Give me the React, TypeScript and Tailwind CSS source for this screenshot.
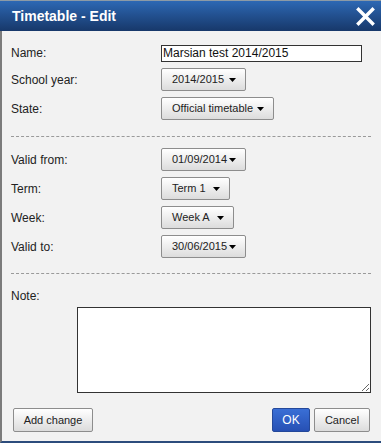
import React from 'react';

const Caret = () => (
  <svg width="7" height="4" viewBox="0 0 7 4" className="shrink-0">
    <path d="M0 0 H7 L3.5 4 Z" fill="#000" />
  </svg>
);

const Select = ({ value, width }: { value: string; width: string }) => (
  <button
    className={`${width} shrink-0 h-[23px] flex items-center justify-between pl-[10px] pr-[9px] whitespace-nowrap rounded-[2px] border border-[#8d8d8d] bg-gradient-to-b from-[#ffffff] to-[#dcdcdc] text-[11px] text-[#222]`}
  >
    <span>{value}</span>
    <Caret />
  </button>
);

const Row = ({ label, children }: { label: string; children: React.ReactNode }) => (
  <div className="flex items-center">
    <div className="w-[150px] shrink-0 text-[12px] text-[#222]">{label}</div>
    {children}
  </div>
);

export default function App() {
  return (
    <div className="w-[381px] h-[443px] flex flex-col bg-[#f2f2f2] font-['Liberation_Sans',Arial,sans-serif]">
      <div className="h-[31px] shrink-0 flex items-center justify-between pl-[12px] pr-[6px] bg-gradient-to-b from-[#2d68b4] to-[#17386a] border-t border-[#8c9aa6]">
        <span className="text-white font-bold text-[14px]">Timetable - Edit</span>
        <svg width="19" height="19" viewBox="0 0 19 19">
          <path d="M2.5 2.5 L16.5 16.5 M16.5 2.5 L2.5 16.5" stroke="white" strokeWidth="3.4" strokeLinecap="square" />
        </svg>
      </div>
      <div className="flex-1 flex flex-col border-l-2 border-[#7c7c7c] border-b-2 border-b-[#2c4c7c] pl-[9px] pr-[10px]">
        <div className="pt-[13px] flex flex-col gap-[6px]">
          <Row label="Name:">
            <input
              readOnly
              value="Marsian test 2014/2015"
              className="w-[201px] h-[17px] border border-[#333] bg-white px-[1px] text-[12px] text-[#111] outline-none"
            />
          </Row>
          <Row label="School year:">
            <Select value="2014/2015" width="w-[85px]" />
          </Row>
          <Row label="State:">
            <Select value="Official timetable" width="w-[113px]" />
          </Row>
        </div>
        <div className="mt-[16px] mb-[11px] border-t border-dashed border-[#9a9a9a]" />
        <div className="flex flex-col gap-[6px]">
          <Row label="Valid from:">
            <Select value="01/09/2014" width="w-[85px]" />
          </Row>
          <Row label="Term:">
            <Select value="Term 1" width="w-[69px]" />
          </Row>
          <Row label="Week:">
            <Select value="Week A" width="w-[73px]" />
          </Row>
          <Row label="Valid to:">
            <Select value="30/06/2015" width="w-[85px]" />
          </Row>
        </div>
        <div className="mt-[15px] border-t border-dashed border-[#9a9a9a]" />
        <div className="mt-[13px] text-[12px] text-[#222]">Note:</div>
        <div className="flex justify-end mt-[2px]">
          <textarea className="w-[294px] h-[86px] border border-[#333] bg-white resize-y outline-none" />
        </div>
        <div className="mt-[15px] flex items-center pl-[2px] pr-[1px]">
          <button className="w-[80px] h-[24px] rounded-[2px] border border-[#8d8d8d] bg-gradient-to-b from-[#ffffff] to-[#dcdcdc] text-[11px] text-[#222]">
            Add change
          </button>
          <div className="flex-1" />
          <button className="w-[38px] h-[24px] rounded-[2px] border border-[#24489a] bg-gradient-to-b from-[#3a6fd6] to-[#2750b4] text-[12px] text-white">
            OK
          </button>
          <button className="ml-[4px] w-[56px] h-[24px] rounded-[2px] border border-[#8d8d8d] bg-gradient-to-b from-[#ffffff] to-[#dcdcdc] text-[11px] text-[#222]">
            Cancel
          </button>
        </div>
      </div>
    </div>
  );
}
